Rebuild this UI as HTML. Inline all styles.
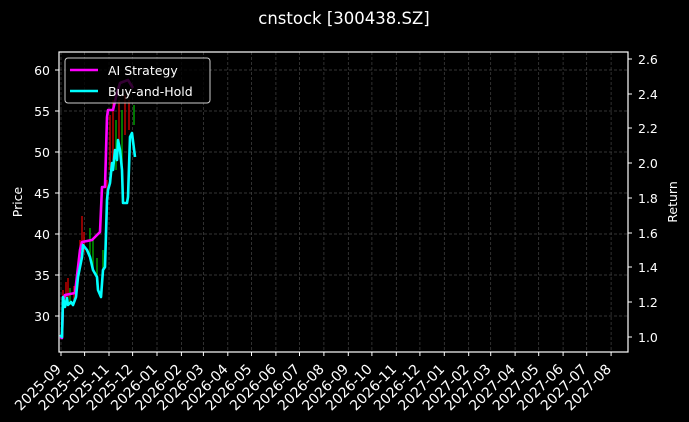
<!DOCTYPE html>
<html><head><style>
html,body{margin:0;padding:0;background:#000;}
svg{display:block;font-family:"DejaVu Sans","Liberation Sans",sans-serif;}
</style></head><body>
<svg width="689" height="422" viewBox="0 0 689 422" xmlns="http://www.w3.org/2000/svg">
<rect width="689" height="422" fill="#000"/>
<text x="344" y="24" fill="#fff" font-size="16.5" text-anchor="middle">cnstock [300438.SZ]</text>
<g stroke="#444" stroke-width="0.7" stroke-dasharray="3,2">
<line x1="59" x2="628" y1="70" y2="70"/><line x1="59" x2="628" y1="111" y2="111"/><line x1="59" x2="628" y1="152" y2="152"/><line x1="59" x2="628" y1="193" y2="193"/><line x1="59" x2="628" y1="234" y2="234"/><line x1="59" x2="628" y1="275" y2="275"/><line x1="59" x2="628" y1="316" y2="316"/>
<line x1="61" x2="61" y1="52" y2="352"/><line x1="84.6" x2="84.6" y1="52" y2="352"/><line x1="109" x2="109" y1="52" y2="352"/><line x1="132.6" x2="132.6" y1="52" y2="352"/><line x1="157" x2="157" y1="52" y2="352"/><line x1="181.4" x2="181.4" y1="52" y2="352"/><line x1="203.4" x2="203.4" y1="52" y2="352"/><line x1="227.8" x2="227.8" y1="52" y2="352"/><line x1="251.5" x2="251.5" y1="52" y2="352"/><line x1="275.9" x2="275.9" y1="52" y2="352"/><line x1="299.5" x2="299.5" y1="52" y2="352"/><line x1="323.9" x2="323.9" y1="52" y2="352"/><line x1="348.3" x2="348.3" y1="52" y2="352"/><line x1="371.9" x2="371.9" y1="52" y2="352"/><line x1="396.3" x2="396.3" y1="52" y2="352"/><line x1="419.9" x2="419.9" y1="52" y2="352"/><line x1="444.3" x2="444.3" y1="52" y2="352"/><line x1="468.7" x2="468.7" y1="52" y2="352"/><line x1="490.7" x2="490.7" y1="52" y2="352"/><line x1="515.1" x2="515.1" y1="52" y2="352"/><line x1="538.7" x2="538.7" y1="52" y2="352"/><line x1="563.1" x2="563.1" y1="52" y2="352"/><line x1="586.7" x2="586.7" y1="52" y2="352"/><line x1="611.1" x2="611.1" y1="52" y2="352"/>
</g>
<g stroke-width="1.4">
<line x1="63" x2="63" y1="290" y2="310" stroke="#c00"/><line x1="66" x2="66" y1="282" y2="300" stroke="#c00"/><line x1="68" x2="68" y1="278" y2="298" stroke="#c00"/><line x1="70" x2="70" y1="288" y2="305" stroke="#0a0"/><line x1="74" x2="74" y1="286" y2="300" stroke="#c00"/>
<line x1="80" x2="80" y1="240" y2="262" stroke="#c00"/><line x1="82" x2="82" y1="216" y2="250" stroke="#c00"/><line x1="84" x2="84" y1="232" y2="252" stroke="#c00"/><line x1="90" x2="90" y1="228" y2="258" stroke="#0a0"/><line x1="93" x2="93" y1="240" y2="270" stroke="#0a0"/><line x1="97" x2="97" y1="258" y2="285" stroke="#0a0"/><line x1="103" x2="103" y1="250" y2="275" stroke="#0a0"/>
<line x1="107" x2="107" y1="180" y2="220" stroke="#c00"/><line x1="110" x2="110" y1="115" y2="170" stroke="#c00"/><line x1="113" x2="113" y1="100" y2="160" stroke="#c00"/><line x1="116" x2="116" y1="120" y2="170" stroke="#0a0"/><line x1="119" x2="119" y1="100" y2="150" stroke="#c00"/><line x1="122" x2="122" y1="110" y2="165" stroke="#0a0"/><line x1="125" x2="125" y1="95" y2="135" stroke="#c00"/><line x1="129" x2="129" y1="100" y2="130" stroke="#c00"/><line x1="134" x2="134" y1="105" y2="125" stroke="#0a0"/>
</g>
<polyline fill="none" stroke="#ff00ff" stroke-width="2.6" stroke-linejoin="round" points="60,337 62,338 63,300 65,295 75,293 80,250 82,242 92,240 100,232 102,187 105,187 107,117 108,110 113,110 117,93 120,83 128,80 133,88"/>
<polyline fill="none" stroke="#00ffff" stroke-width="2.6" stroke-linejoin="round" points="60,335 62,337 63,297 65,307 67,298 68,305 71,302 73,305 76,297 78,277 82,257 83,245 87,250 90,257 93,270 97,277 98,290 101,297 103,270 105,267 107,200 108,190 110,183 112,163 113,170 115,150 117,160 118,140 120,150 122,170 123,203 127,203 128,197 130,137 132,133 135,157"/>
<rect x="59" y="52" width="569" height="300" fill="none" stroke="#fff" stroke-width="1.2"/>
<g fill="#fff" font-size="12.5" text-anchor="end">
<text x="50" y="75">60</text><text x="50" y="116">55</text><text x="50" y="157">50</text><text x="50" y="198">45</text><text x="50" y="239">40</text><text x="50" y="280">35</text><text x="50" y="321">30</text>
</g>
<g stroke="#fff" stroke-width="1">
<line x1="55" x2="59" y1="70" y2="70"/><line x1="55" x2="59" y1="111" y2="111"/><line x1="55" x2="59" y1="152" y2="152"/><line x1="55" x2="59" y1="193" y2="193"/><line x1="55" x2="59" y1="234" y2="234"/><line x1="55" x2="59" y1="275" y2="275"/><line x1="55" x2="59" y1="316" y2="316"/>
<line x1="628" x2="632" y1="59" y2="59"/><line x1="628" x2="632" y1="94" y2="94"/><line x1="628" x2="632" y1="128" y2="128"/><line x1="628" x2="632" y1="163" y2="163"/><line x1="628" x2="632" y1="198" y2="198"/><line x1="628" x2="632" y1="233" y2="233"/><line x1="628" x2="632" y1="267" y2="267"/><line x1="628" x2="632" y1="302" y2="302"/><line x1="628" x2="632" y1="337" y2="337"/>
<line x1="61" x2="61" y1="352" y2="356"/><line x1="84.6" x2="84.6" y1="352" y2="356"/><line x1="109" x2="109" y1="352" y2="356"/><line x1="132.6" x2="132.6" y1="352" y2="356"/><line x1="157" x2="157" y1="352" y2="356"/><line x1="181.4" x2="181.4" y1="352" y2="356"/><line x1="203.4" x2="203.4" y1="352" y2="356"/><line x1="227.8" x2="227.8" y1="352" y2="356"/><line x1="251.5" x2="251.5" y1="352" y2="356"/><line x1="275.9" x2="275.9" y1="352" y2="356"/><line x1="299.5" x2="299.5" y1="352" y2="356"/><line x1="323.9" x2="323.9" y1="352" y2="356"/><line x1="348.3" x2="348.3" y1="352" y2="356"/><line x1="371.9" x2="371.9" y1="352" y2="356"/><line x1="396.3" x2="396.3" y1="352" y2="356"/><line x1="419.9" x2="419.9" y1="352" y2="356"/><line x1="444.3" x2="444.3" y1="352" y2="356"/><line x1="468.7" x2="468.7" y1="352" y2="356"/><line x1="490.7" x2="490.7" y1="352" y2="356"/><line x1="515.1" x2="515.1" y1="352" y2="356"/><line x1="538.7" x2="538.7" y1="352" y2="356"/><line x1="563.1" x2="563.1" y1="352" y2="356"/><line x1="586.7" x2="586.7" y1="352" y2="356"/><line x1="611.1" x2="611.1" y1="352" y2="356"/>
</g>
<g fill="#fff" font-size="12.5">
<text x="638" y="64">2.6</text><text x="638" y="99">2.4</text><text x="638" y="133">2.2</text><text x="638" y="168">2.0</text><text x="638" y="203">1.8</text><text x="638" y="238">1.6</text><text x="638" y="272">1.4</text><text x="638" y="307">1.2</text><text x="638" y="342">1.0</text>
</g>
<text transform="translate(22,202) rotate(-90)" fill="#fff" font-size="12.5" text-anchor="middle">Price</text>
<text transform="translate(677,202) rotate(-90)" fill="#fff" font-size="12.5" text-anchor="middle">Return</text>
<g fill="#fff" font-size="14" text-anchor="end">
<text transform="translate(62,370) rotate(-45)">2025-09</text>
<text transform="translate(85.6,370) rotate(-45)">2025-10</text>
<text transform="translate(110,370) rotate(-45)">2025-11</text>
<text transform="translate(133.6,370) rotate(-45)">2025-12</text>
<text transform="translate(158,370) rotate(-45)">2026-01</text>
<text transform="translate(182.4,370) rotate(-45)">2026-02</text>
<text transform="translate(204.4,370) rotate(-45)">2026-03</text>
<text transform="translate(228.8,370) rotate(-45)">2026-04</text>
<text transform="translate(252.5,370) rotate(-45)">2026-05</text>
<text transform="translate(276.9,370) rotate(-45)">2026-06</text>
<text transform="translate(300.5,370) rotate(-45)">2026-07</text>
<text transform="translate(324.9,370) rotate(-45)">2026-08</text>
<text transform="translate(349.3,370) rotate(-45)">2026-09</text>
<text transform="translate(372.9,370) rotate(-45)">2026-10</text>
<text transform="translate(397.3,370) rotate(-45)">2026-11</text>
<text transform="translate(420.9,370) rotate(-45)">2026-12</text>
<text transform="translate(445.3,370) rotate(-45)">2027-01</text>
<text transform="translate(469.7,370) rotate(-45)">2027-02</text>
<text transform="translate(491.7,370) rotate(-45)">2027-03</text>
<text transform="translate(516.1,370) rotate(-45)">2027-04</text>
<text transform="translate(539.7,370) rotate(-45)">2027-05</text>
<text transform="translate(564.1,370) rotate(-45)">2027-06</text>
<text transform="translate(587.7,370) rotate(-45)">2027-07</text>
<text transform="translate(612.1,370) rotate(-45)">2027-08</text>
</g>
<rect x="65" y="58" width="145" height="45" rx="3" fill="#000" fill-opacity="0.8" stroke="#ccc" stroke-width="1"/>
<line x1="70" x2="98" y1="70" y2="70" stroke="#ff00ff" stroke-width="2.6"/>
<line x1="70" x2="98" y1="91" y2="91" stroke="#00ffff" stroke-width="2.6"/>
<text x="108" y="75" fill="#fff" font-size="12.5">AI Strategy</text>
<text x="108" y="96" fill="#fff" font-size="12.5">Buy-and-Hold</text>
</svg>
</body></html>
